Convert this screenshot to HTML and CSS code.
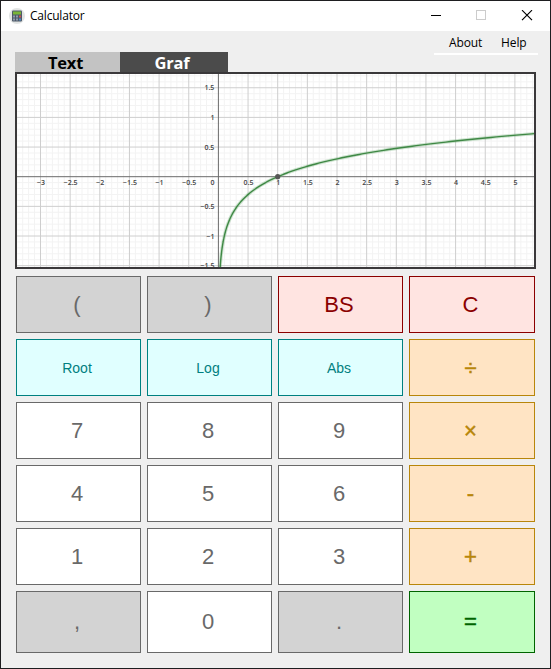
FILE: index.html
```html
<!DOCTYPE html>
<html lang="en">
<head>
<meta charset="utf-8">
<title>Calculator</title>
<link rel="stylesheet" href="styles.css">
</head>
<body>
<div class="window">
  <header class="titlebar">
    <svg class="app-icon" width="16" height="16" viewBox="0 0 16 16">
      <circle cx="8" cy="8" r="8" fill="#e2e4e3"/>
      <rect x="3" y="2.5" width="10" height="11" rx="1" fill="#4d5868"/>
      <rect x="4" y="3.5" width="8" height="3" fill="#79b536"/>
      <path d="M4 7.6h2v2H4zM7 7.6h2v2H7zM4 10.6h2v2H4zM7 10.6h2v2H7z" fill="#8f9bab"/>
      <path d="M10 7.6h2v2h-2z" fill="#d0504f"/>
      <path d="M10 10.6h2v2h-2z" fill="#4b8ac4"/>
    </svg>
    <h1 class="title">Calculator</h1>
    <svg class="controls" width="106" height="12" viewBox="0 0 106 12" shape-rendering="crispEdges">
      <path d="M0 5.5h10" stroke="#000"/>
      <rect x="45.5" y="0.5" width="9" height="9" fill="none" stroke="#ccc"/>
      <path d="M91 0.2l10 10M101 0.2l-10 10" stroke="#000" stroke-width="1.2" shape-rendering="auto"/>
    </svg>
  </header>
  <div class="top">
    <nav class="tabs"><span class="tab">Text</span><span class="tab tab-active">Graf</span></nav>
    <nav class="menu"><span class="about">About</span><span class="help">Help</span></nav>
  </div>
  <div class="plot"><svg id="graph" width="517" height="193" viewBox="17 74 517 193"></svg></div>
  <main class="keys">
    <button class="key gray">(</button><button class="key gray">)</button><button class="key red">BS</button><button class="key red">C</button>
    <button class="key fn">Root</button><button class="key fn">Log</button><button class="key fn">Abs</button><button class="key op">÷</button>
    <button class="key">7</button><button class="key">8</button><button class="key">9</button><button class="key op">×</button>
    <button class="key">4</button><button class="key">5</button><button class="key">6</button><button class="key op">-</button>
    <button class="key">1</button><button class="key">2</button><button class="key">3</button><button class="key op">+</button>
    <button class="key gray">,</button><button class="key">0</button><button class="key gray">.</button><button class="key equals">=</button>
  </main>
</div>
<script src="graph.js"></script>
</body>
</html>
```
FILE: graph.js
```js
const svg = document.getElementById('graph');
const UNIT = 59.3, OX = 218.4, OY = 176.7;

function add(tag, attrs, text) {
  const el = document.createElementNS('http://www.w3.org/2000/svg', tag);
  for (const name in attrs) el.setAttribute(name, attrs[name]);
  if (text !== undefined) el.textContent = text;
  svg.appendChild(el);
}

// Grid: a fine line every 0.1 and a strong one every 0.5
let minor = '', major = '';
for (let i = -34; i <= 53; i++) {
  const line = `M${OX + i * UNIT / 10} 74v193`;
  if (i % 5) minor += line; else if (i) major += line;
}
for (let i = -15; i <= 17; i++) {
  const line = `M17 ${OY - i * UNIT / 10}h517`;
  if (i % 5) minor += line; else if (i) major += line;
}
add('path', { d: minor, class: 'minor' });
add('path', { d: major, class: 'major' });
add('path', { d: `M17 ${OY}h517M${OX} 74v193`, class: 'axis' });

// Axis labels
const label = v => String(v).replace('-', '−');
for (let v = -3; v <= 5; v += 0.5) {
  if (v) add('text', { x: OX + v * UNIT + 0.5, y: 185.4, class: 'tick' }, label(v));
}
for (let v = -1.5; v <= 1.5; v += 0.5) {
  const y = v ? OY - v * UNIT + 2.6 : 185.4;
  add('text', { x: 214.4, y, class: 'tick tick-y' }, label(v));
}

// y = log10(x)
let curve = '';
for (let t = Math.log(0.028); t <= Math.log(5.4); t += 0.02) {
  const x = Math.exp(t);
  curve += (curve ? 'L' : 'M') + (OX + x * UNIT).toFixed(2) + ' ' + (OY - Math.log10(x) * UNIT).toFixed(2);
}
add('path', { d: curve, class: 'curve-glow' });
add('path', { d: curve, class: 'curve' });
add('circle', { cx: OX + UNIT, cy: OY, r: 2.6, class: 'root' });
```
FILE: styles.css
```css
* { box-sizing: border-box; }
body { margin: 0; font-family: "Open Sans", sans-serif; }
.window { width: 551px; height: 669px; border: 1px solid #1e1e20; background: #efefef; overflow: hidden; }
.titlebar { display: flex; align-items: center; height: 30px; padding: 0 13px 0 8px; background: #fff; }
.title { flex: 1; margin: 0 0 0 5px; font-size: 12px; font-weight: 400; line-height: 18px; letter-spacing: -0.2px; color: #000; }
.top { display: flex; justify-content: space-between; align-items: flex-end; height: 41px; padding: 0 12px 0 14px; }
.tabs { display: flex; height: 20px; }
.tab { width: 105px; padding-right: 4px; background: #c3c3c3; color: #000; font-size: 16.5px; font-weight: 700; line-height: 21px; letter-spacing: -0.2px; text-align: center; }
.tab-active { width: 108px; background: #4b4b4b; color: #fff; }
.menu { align-self: flex-start; display: flex; width: 104px; height: 24px; padding-left: 15px; border-bottom: 2px solid #fff; font-size: 12px; line-height: 24px; letter-spacing: -0.1px; }
.about { width: 52px; }
.plot { width: 521px; height: 197px; margin-left: 14px; border: 2px solid #3a383a; background: #fff; }
.plot svg { display: block; }
.minor { stroke: #f3f3f3; fill: none; }
.major { stroke: #cecece; fill: none; }
.axis { stroke: #6b6b6b; fill: none; }
.tick { font: 600 7px "Open Sans", sans-serif; fill: #444; text-anchor: middle; }
.tick-y { text-anchor: end; }
.curve-glow { fill: none; stroke: #5da562; stroke-opacity: .3; stroke-width: 3.4; }
.curve { fill: none; stroke: #3f8845; stroke-width: 1.4; }
.root { fill: #555; }
.keys { display: grid; grid-template-columns: 125px 125px 125px 126px; grid-template-rows: repeat(5, 57px) 62px; gap: 6px; margin: 7px 0 0 15px; }
.key { margin: 0; padding: 0 3px 0 0; border: 1px solid #696969; border-radius: 0; background: #fff; color: #696969; font: 22px "Liberation Sans", sans-serif; }
.gray { background: #d3d3d3; }
.red { background: #ffe4e1; border-color: #8b0000; color: #8b0000; }
.fn { background: #e0ffff; border-color: #008080; color: #008080; font-size: 14px; padding-top: 1px; }
.op { background: #ffe4c4; border-color: #b8860b; color: #b8860b; -webkit-text-stroke: 0.5px #b8860b; }
.equals { background: #c1ffc1; border-color: #006400; color: #006400; -webkit-text-stroke: 0.5px #006400; }
```
